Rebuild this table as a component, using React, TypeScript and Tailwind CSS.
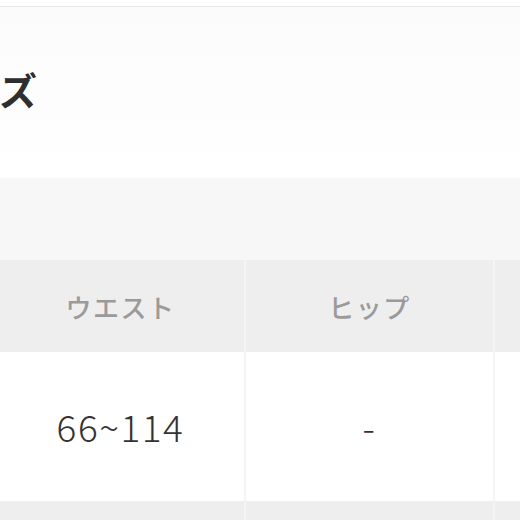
const font = { fontFamily: '"Noto Sans CJK JP", "Noto Sans", sans-serif' };

const headers = ["ウエスト", "ヒップ", ""];
const values = ["66~114", "-", ""];

export default function App() {
  return (
    <div className="h-[520px] w-[520px] overflow-hidden bg-white" style={font}>
      <div className="h-[6px] bg-white" />
      <div className="border-t border-[#e8e8e8] bg-gradient-to-b from-[#fbfbfb] to-white">
        <div className="flex h-[171px] items-center pb-[8px]">
          <h2 className="-ml-[1px] text-[38px] font-semibold leading-none text-[#2e2e2e]">ズ</h2>
        </div>
      </div>

      <div className="h-[82px] bg-[#f7f7f7]" />

      <div className="-ml-[3px] grid w-[560px] grid-cols-[247px_247px_247px] gap-x-[2px] bg-[#f4f4f4]">
        {headers.map((h, i) => (
          <div
            key={"h" + i}
            className="flex h-[92px] items-center justify-center bg-[#eeeeee] text-[26px] font-medium tracking-[1.5px] text-[#9a9a9a]"
          >
            {h}
          </div>
        ))}
        {values.map((v, i) => (
          <div
            key={"v" + i}
            className="flex h-[149px] items-center justify-center bg-white text-[37px] font-light tracking-[1.5px] text-[#333333]"
          >
            {v}
          </div>
        ))}
        {headers.map((_, i) => (
          <div key={"n" + i} className="h-[40px] bg-[#eeeeee]" />
        ))}
      </div>
    </div>
  );
}
